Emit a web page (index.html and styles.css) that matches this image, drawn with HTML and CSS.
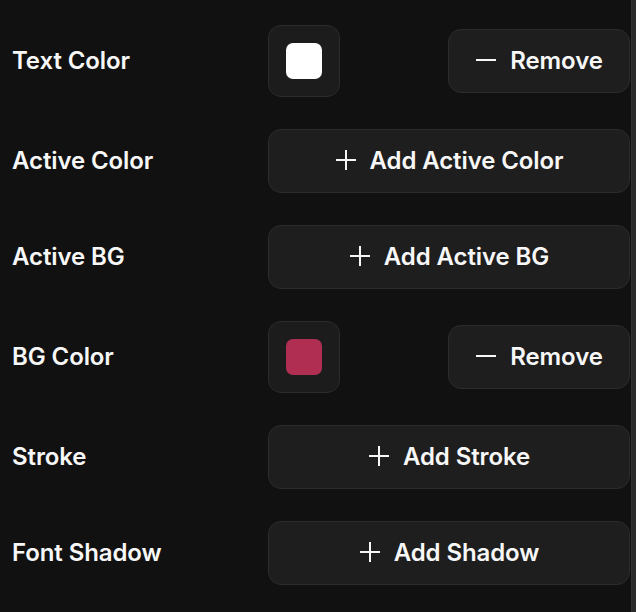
FILE: index.html
```html
<!DOCTYPE html>
<html>
<head>
<meta charset="utf-8">
<link rel="stylesheet" href="styles.css">
</head>
<body>
<div class="page">
  <div class="panel">
    <div class="row row-swatch">
      <div class="label">Text Color</div>
      <div class="control split">
        <div class="swatch-box"><div class="swatch swatch-white"></div></div>
        <button class="btn btn-remove">
          <svg class="ico" viewBox="0 0 22 22"><path d="M1 11H21" /></svg>
          <span>Remove</span>
        </button>
      </div>
    </div>
    <div class="row">
      <div class="label">Active Color</div>
      <div class="control">
        <button class="btn btn-full">
          <svg class="ico" viewBox="0 0 22 22"><path d="M1 11H21M11 1V21" /></svg>
          <span>Add Active Color</span>
        </button>
      </div>
    </div>
    <div class="row">
      <div class="label">Active BG</div>
      <div class="control">
        <button class="btn btn-full">
          <svg class="ico" viewBox="0 0 22 22"><path d="M1 11H21M11 1V21" /></svg>
          <span>Add Active BG</span>
        </button>
      </div>
    </div>
    <div class="row row-swatch">
      <div class="label">BG Color</div>
      <div class="control split">
        <div class="swatch-box"><div class="swatch swatch-red"></div></div>
        <button class="btn btn-remove">
          <svg class="ico" viewBox="0 0 22 22"><path d="M1 11H21" /></svg>
          <span>Remove</span>
        </button>
      </div>
    </div>
    <div class="row">
      <div class="label">Stroke</div>
      <div class="control">
        <button class="btn btn-full">
          <svg class="ico" viewBox="0 0 22 22"><path d="M1 11H21M11 1V21" /></svg>
          <span>Add Stroke</span>
        </button>
      </div>
    </div>
    <div class="row">
      <div class="label">Font Shadow</div>
      <div class="control">
        <button class="btn btn-full">
          <svg class="ico" viewBox="0 0 22 22"><path d="M1 11H21M11 1V21" /></svg>
          <span>Add Shadow</span>
        </button>
      </div>
    </div>
  </div>
  <div class="scrollbar"></div>
</div>
</body>
</html>
```

FILE: styles.css
```css
html, body {
  margin: 0;
  padding: 0;
  background: #111111;
  height: 100%;
}
body {
  font-family: "Inter", "Liberation Sans", sans-serif;
  color: #f5f5f5;
}
.page {
  display: flex;
  height: 612px;
  overflow: hidden;
}
.panel {
  flex: 1;
  display: flex;
  flex-direction: column;
  gap: 32px;
  padding: 25px 1px 0 12px;
}
.scrollbar {
  width: 5px;
  background: #2b2b2b;
  border-left: 1px solid #333333;
  box-sizing: border-box;
}
.row {
  display: grid;
  grid-template-columns: 256px 1fr;
  align-items: center;
  height: 64px;
}
.row-swatch {
  height: 72px;
}
.label {
  font-size: 24px;
  font-weight: 600;
  letter-spacing: -0.1px;
  color: #f7f7f7;
  line-height: 1;
  padding-bottom: 1px;
}
.control {
  display: flex;
  align-items: center;
}
.split {
  justify-content: space-between;
}
.swatch-box {
  width: 72px;
  height: 72px;
  box-sizing: border-box;
  border: 1.5px solid #2c2c2c;
  border-radius: 13px;
  background: #1c1c1c;
  display: flex;
  align-items: center;
  justify-content: center;
}
.swatch {
  width: 36px;
  height: 36px;
  border-radius: 7px;
}
.swatch-white { background: #ffffff; }
.swatch-red { background: #b02e52; }
.btn {
  height: 64px;
  box-sizing: border-box;
  border: 1.5px solid #2c2c2c;
  border-radius: 13px;
  background: #1e1e1e;
  color: #f7f7f7;
  font-family: inherit;
  font-size: 24px;
  font-weight: 600;
  letter-spacing: -0.1px;
  display: flex;
  align-items: center;
  justify-content: center;
  gap: 13px;
  padding: 0 0 2px 0;
  cursor: pointer;
}
.btn-remove {
  width: 182px;
}
.btn-full {
  width: 100%;
}
.ico {
  width: 22px;
  height: 22px;
  fill: none;
  stroke: #f7f7f7;
  stroke-width: 2;
}
```
